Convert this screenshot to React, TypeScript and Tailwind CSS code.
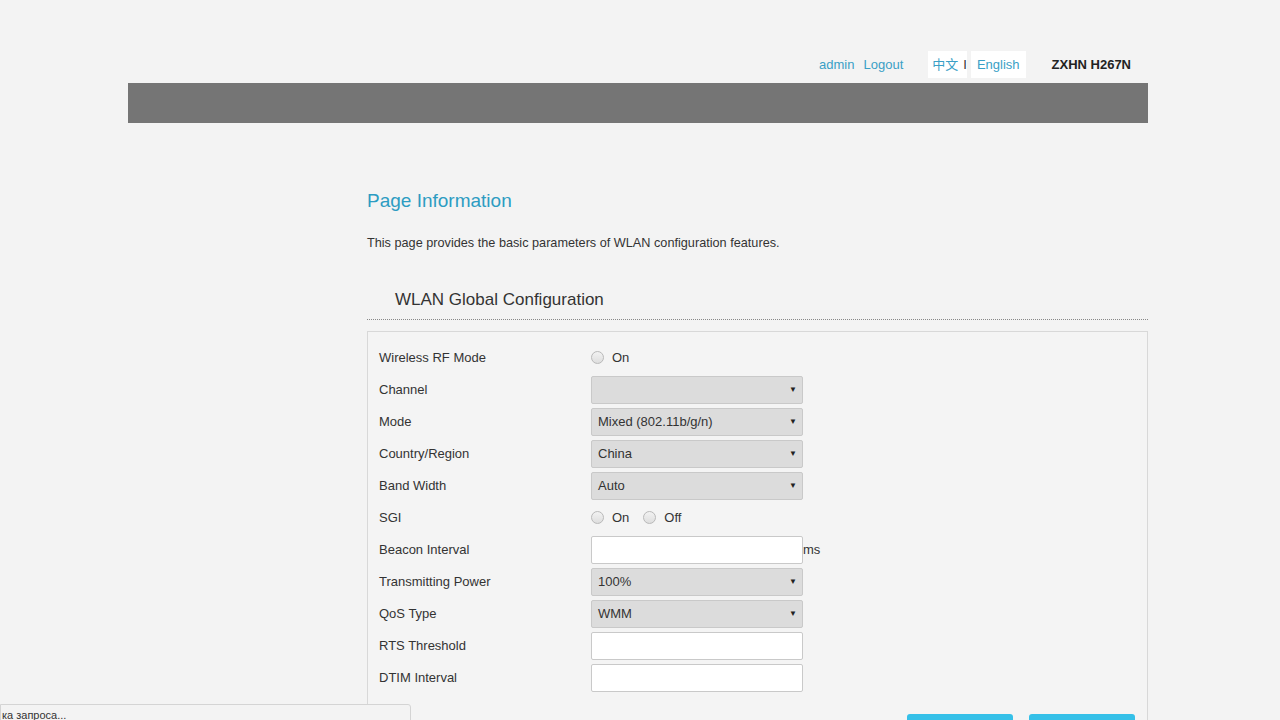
import React from 'react';

const font = { fontFamily: '"Liberation Sans", Arial, "Noto Sans CJK SC", sans-serif' };

type Row =
  | { label: string; kind: 'select'; value: string }
  | { label: string; kind: 'input'; suffix?: string }
  | { label: string; kind: 'radio'; options: string[] };

const rows: Row[] = [
  { label: 'Wireless RF Mode', kind: 'radio', options: ['On'] },
  { label: 'Channel', kind: 'select', value: '' },
  { label: 'Mode', kind: 'select', value: 'Mixed (802.11b/g/n)' },
  { label: 'Country/Region', kind: 'select', value: 'China' },
  { label: 'Band Width', kind: 'select', value: 'Auto' },
  { label: 'SGI', kind: 'radio', options: ['On', 'Off'] },
  { label: 'Beacon Interval', kind: 'input', suffix: 'ms' },
  { label: 'Transmitting Power', kind: 'select', value: '100%' },
  { label: 'QoS Type', kind: 'select', value: 'WMM' },
  { label: 'RTS Threshold', kind: 'input' },
  { label: 'DTIM Interval', kind: 'input' },
];

const Radio = () => (
  <span className="inline-block w-[13px] h-[13px] rounded-full border border-[#b9b9b9] bg-gradient-to-b from-[#f2f2f2] to-[#dedede]" />
);

const Control = ({ row }: { row: Row }) => {
  if (row.kind === 'radio') {
    return (
      <div className="flex items-center gap-[14px] -mt-[2px]">
        {row.options.map((o) => (
          <span key={o} className="flex items-center gap-[8px]">
            <Radio />
            <span className="text-[13px] text-[#333] mt-[2px]">{o}</span>
          </span>
        ))}
      </div>
    );
  }
  if (row.kind === 'select') {
    return (
      <div className="w-[212px] h-[28px] rounded-[2px] border border-[#c9c9c9] bg-[#dcdcdc] flex items-center justify-between pl-[6px] pr-[5px]">
        <span className="text-[13px] text-[#333]">{row.value}</span>
        <span className="text-[8px] text-[#222]">▼</span>
      </div>
    );
  }
  return (
    <div className="flex items-center">
      <div className="w-[212px] h-[28px] rounded-[2px] border border-[#c9c9c9] bg-white" />
      {row.suffix && <span className="text-[13px] text-[#333]">{row.suffix}</span>}
    </div>
  );
};

export default function App() {
  return (
    <div className="min-h-[720px] bg-[#f3f3f3] relative overflow-hidden" style={font}>
      <div className="ml-[128px] w-[1020px]">
        {/* top links */}
        <div className="h-[83px] flex items-end justify-end pb-[5px] pr-[17px]">
          <div className="flex items-center text-[13px]">
            <span className="text-[#3a9fc6]">admin</span>
            <span className="text-[#3a9fc6] ml-[9px]">Logout</span>
            <span className="ml-[25px] bg-white h-[27px] pl-[4px] pr-[0px] flex items-center">
              <span className="text-[#3a9fc6]">中文</span>
              <span className="text-[#333] ml-[5px]">I</span>
            </span>
            <span className="ml-[4px] bg-white h-[27px] px-[6px] flex items-center text-[#3a9fc6]">English</span>
            <span className="ml-[26px] font-bold text-[#222] text-[13px]">ZXHN H267N</span>
          </div>
        </div>
        <div className="h-[40px] bg-[#757575]" />

        <div className="flex">
          <div className="w-[239px] shrink-0" />
          <div className="flex-1">
            <h1 className="mt-[65px] text-[19px] text-[#2d9cc2] leading-[26px]">Page Information</h1>
            <p className="mt-[20px] text-[12.7px] text-[#333]">This page provides the basic parameters of WLAN configuration features.</p>
            <h2 className="mt-[35px] pl-[28px] text-[17px] text-[#333] leading-[24px] pb-[7px] border-b border-dotted border-[#888]">
              WLAN Global Configuration
            </h2>
            <div className="mt-[11px] border border-[#d8d8d8] bg-[#f4f4f4] pt-[10px] pb-[40px] px-[11px]">
              {rows.map((row) => (
                <div key={row.label} className="h-[32px] flex items-center">
                  <span className="w-[212px] text-[13px] text-[#333]">{row.label}</span>
                  <Control row={row} />
                </div>
              ))}
            </div>
          </div>
        </div>
      </div>

      {/* buttons peeking at bottom */}
      <div className="absolute left-[907px] top-[714px] flex gap-[16px]">
        <div className="w-[106px] h-[20px] rounded-[3px] bg-[#35c0e8]" />
        <div className="w-[106px] h-[20px] rounded-[3px] bg-[#35c0e8]" />
      </div>

      {/* browser status bubble */}
      <div className="fixed left-0 top-[704px] w-[411px] h-[20px] bg-[#f3f3f3] border border-[#d4d4d4] rounded-tr-[3px] pl-[1px] text-[11px] text-[#333] leading-[20px]">
        ка запроса...
      </div>
    </div>
  );
}
